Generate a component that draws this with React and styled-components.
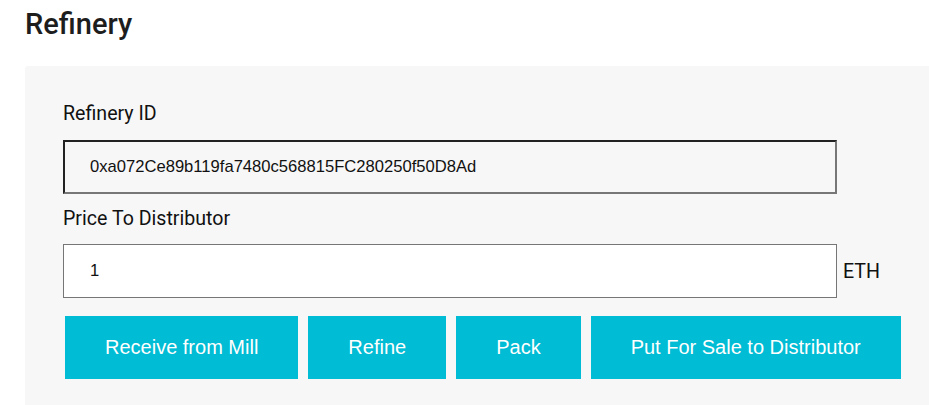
import React from "react"
import styled, { createGlobalStyle } from "styled-components"

const GlobalStyle = createGlobalStyle`
  body {
    margin: 0;
    background: #fff;
    font-family: Roboto, "Noto Sans", sans-serif;
    color: #111;
  }
`

const Page = styled.div`
  padding: 5px 0 0 25px;
  overflow: hidden;
  height: 405px;
  box-sizing: border-box;
`

const Heading = styled.h2`
  margin: 0;
  font-family: Roboto, sans-serif;
  font-weight: 500;
  font-size: 29px;
  line-height: 38px;
  color: #1d1d1d;
`

const Panel = styled.div`
  margin-top: 23px;
  background: #f7f7f7;
  border-radius: 3px 0 0 0;
  padding: 37px 0 26px 38px;
  min-height: 400px;
`

const Label = styled.div`
  font-size: 19.6px;
  line-height: 22px;
  color: #111;
  margin-bottom: ${p => p.$gap || 12}px;
`

const Row = styled.div`
  display: flex;
  align-items: center;
  gap: 6px;
  margin-bottom: ${p => p.$mb || 0}px;
`

const TextInput = styled.input`
  box-sizing: border-box;
  width: 774px;
  height: 54px;
  font-family: Arial, "Liberation Sans", sans-serif;
  font-size: 16.6px;
  color: #111;
  outline: none;
  background: ${p => (p.readOnly ? "#f7f7f7" : "#fff")};
  border: ${p => (p.readOnly ? "2px solid" : "1px solid #767676")};
  border-color: ${p => (p.readOnly ? "#222 #777 #777 #222" : "#767676")};
  padding: 0 0 0 ${p => (p.readOnly ? 25 : 26)}px;
`

const Unit = styled.span`
  font-size: 19.6px;
  color: #111;
`

const Buttons = styled.div`
  display: flex;
  gap: 10px;
  margin-left: 2px;
`

const Button = styled.button`
  height: 63px;
  padding: 0 40px;
  border: none;
  background: #00bcd4;
  color: #fff;
  font-family: Arial, "Liberation Sans", sans-serif;
  font-size: 20px;
  cursor: pointer;
`

export default function App() {
  return (
    <>
      <GlobalStyle />
      <Page>
        <Heading>Refinery</Heading>
        <Panel>
          <Label $gap={15}>Refinery ID</Label>
          <Row $mb={14}>
            <TextInput readOnly value="0xa072Ce89b119fa7480c568815FC280250f50D8Ad" />
          </Row>
          <Label $gap={14}>Price To Distributor</Label>
          <Row $mb={18}>
            <TextInput defaultValue="1" />
            <Unit>ETH</Unit>
          </Row>
          <Buttons>
            <Button>Receive from Mill</Button>
            <Button>Refine</Button>
            <Button>Pack</Button>
            <Button>Put For Sale to Distributor</Button>
          </Buttons>
        </Panel>
      </Page>
    </>
  )
}
